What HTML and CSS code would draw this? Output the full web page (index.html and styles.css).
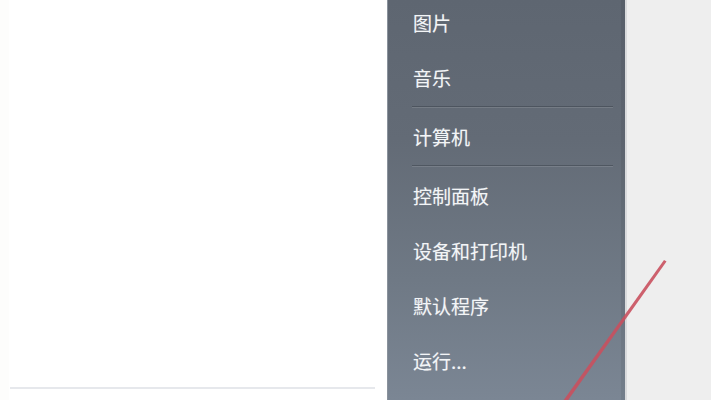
FILE: index.html
```html
<!DOCTYPE html>
<html lang="zh-CN">
<head>
<meta charset="utf-8">
<title>开始菜单</title>
<link rel="stylesheet" href="styles.css">
</head>
<body>
<div class="screen">
  <section class="programs">
    <div class="programs-list"></div>
    <div class="programs-divider"></div>
  </section>
  <nav class="places">
    <ul class="menu">
      <li class="item">图片</li>
      <li class="item">音乐</li>
      <li class="sep"></li>
      <li class="item">计算机</li>
      <li class="sep"></li>
      <li class="item">控制面板</li>
      <li class="item">设备和打印机</li>
      <li class="item">默认程序</li>
      <li class="item">运行...</li>
    </ul>
  </nav>
  <div class="desktop"></div>
  <svg class="annotation" width="711" height="400" viewBox="0 0 711 400">
    <polygon points="664,260 666.5,261.5 567.5,401 563,401" fill="#c9505e" opacity="0.9"/>
  </svg>
</div>
</body>
</html>
```
FILE: styles.css
```css
html, body {
  margin: 0;
  padding: 0;
}
body {
  width: 711px;
  height: 400px;
  overflow: hidden;
  font-family: "Noto Sans CJK SC", "Noto Sans", sans-serif;
}
.screen {
  position: relative;
  display: flex;
  width: 711px;
  height: 400px;
}
.programs {
  width: 387px;
  background: #ffffff;
  display: flex;
  flex-direction: column;
  box-shadow: inset 9px 0 0 #fdfdfc;
}
.programs-list {
  flex: 1;
}
.programs-divider {
  height: 2px;
  margin: 0 12px 11px 10px;
  background: #e6e8ec;
}
.places {
  width: 237px;
  background: linear-gradient(to bottom, #5e6671 0%, #636b76 35%, #6f7985 70%, #7b8694 100%);
  border-left: 1px solid #8a929c;
  border-right: 2px solid #d9dadc;
  box-shadow: inset -4px 0 0 rgba(0, 0, 0, 0.06);
  overflow: hidden;
}
.menu {
  list-style: none;
  margin: -5px 0 0 0;
  padding: 0;
}
.item {
  height: 55px;
  line-height: 55px;
  padding-left: 25px;
  font-size: 19px;
  color: #f3f5f7;
  white-space: nowrap;
  text-shadow: 0 0 1px rgba(255, 255, 255, 0.35);
}
.sep {
  height: 4px;
  display: flex;
  flex-direction: column;
  justify-content: center;
  margin: 0 12px 0 24px;
}
.sep::before {
  content: "";
  display: block;
  height: 1px;
  background: rgba(40, 46, 54, 0.35);
}
.sep::after {
  content: "";
  display: block;
  height: 1px;
  background: rgba(255, 255, 255, 0.12);
}
.desktop {
  flex: 1;
  background: #eeeeee;
}
.annotation {
  position: absolute;
  left: 0;
  top: 0;
  pointer-events: none;
}
```
